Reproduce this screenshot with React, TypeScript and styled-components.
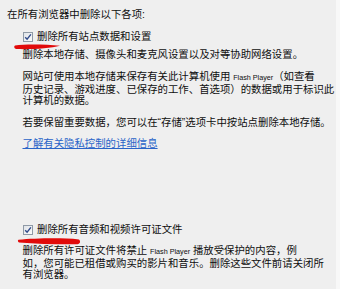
import React from "react";
import styled, { createGlobalStyle } from "styled-components";

const GlobalStyle = createGlobalStyle`
  html, body {
    margin: 0;
    padding: 0;
    background: #f8f8f8;
  }
  body {
    font-family: "Liberation Sans", "Noto Sans CJK SC", sans-serif;
  }
`;

const Panel = styled.div`
  position: relative;
  width: 336px;
  height: 289px;
  box-sizing: border-box;
  padding: 9px 4px 0 7px;
  background: #efefef;
  color: #0e0e0e;
  font-size: 10.4px;
  line-height: 11.5px;
  overflow: hidden;
`;

const Heading = styled.div`
  margin: 0;
`;

const CheckRow = styled.label<{ $top: number }>`
  display: flex;
  align-items: center;
  gap: 4px;
  margin: ${(p) => p.$top}px 0 0 16px;
  height: 11.5px;
`;

const Box = styled.span`
  display: inline-flex;
  align-items: center;
  justify-content: center;
  width: 8px;
  height: 8px;
  border: 1px solid #8f9aa6;
  background: linear-gradient(135deg, #dfe3e8 0%, #fbfbfb 100%);
`;

const Text = styled.p<{ $top: number }>`
  margin: ${(p) => p.$top}px 0 0 15.5px;
  white-space: nowrap;
`;

const Latin = styled.span`
  font-size: 7.2px;
`;

const Link = styled.a<{ $top: number }>`
  display: block;
  margin: ${(p) => p.$top}px 0 0 15.5px;
  color: #2a64c8;
  text-decoration: underline;
  text-underline-offset: 1px;
`;

const Marks = styled.svg`
  position: absolute;
  left: 0;
  top: 0;
  pointer-events: none;
`;

const Check = () => (
  <Box>
    <svg width="8" height="8" viewBox="0 0 8 8">
      <path d="M1.2 4.2 L3.1 6.2 L6.9 1.4" fill="none" stroke="#2f4a8a" strokeWidth="1.4" />
    </svg>
  </Box>
);

export default function App() {
  return (
    <>
      <GlobalStyle />
      <Panel>
        <Heading>在所有浏览器中删除以下各项:</Heading>
        <CheckRow $top={10.5}>
          <Check />
          <span>删除所有站点数据和设置</span>
        </CheckRow>
        <Text $top={6.5}>删除本地存储、摄像头和麦克风设置以及对等协助网络设置。</Text>
        <Text $top={10.5}>
          网站可使用本地存储来保存有关此计算机使用 <Latin>Flash Player</Latin>（如查看
          <br />
          历史记录、游戏进度、已保存的工作、首选项）的数据或用于标识此
          <br />
          计算机的数据。
        </Text>
        <Text $top={10.5}>若要保留重要数据，您可以在“存储”选项卡中按站点删除本地存储。</Text>
        <Link $top={9.5} href="#">了解有关隐私控制的详细信息</Link>
        <CheckRow $top={74.5}>
          <Check />
          <span>删除所有音频和视频许可证文件</span>
        </CheckRow>
        <Text $top={9.5}>
          删除所有许可证文件将禁止 <Latin>Flash Player</Latin> 播放受保护的内容，例
          <br />
          如，您可能已租借或购买的影片和音乐。删除这些文件前请关闭所
          <br />
          有浏览器。
        </Text>
        <Marks width="336" height="289" viewBox="0 0 336 289">
          <path
            d="M15 45.5 C 25 44, 45 44.2, 60 45.8 C 50 48.6, 30 49.6, 16 49 C 13.8 48, 13.8 46.2, 15 45.5 Z"
            fill="#e10a0a"
          />
          <path
            d="M18.5 239.8 C 35 238.4, 60 237.6, 79 239.4 C 81 241.4, 80 243.6, 77.5 244.2 C 60 244.6, 38 243.8, 19 242.4 C 17.6 241.6, 17.6 240.4, 18.5 239.8 Z"
            fill="#e10a0a"
          />
        </Marks>
      </Panel>
    </>
  );
}
